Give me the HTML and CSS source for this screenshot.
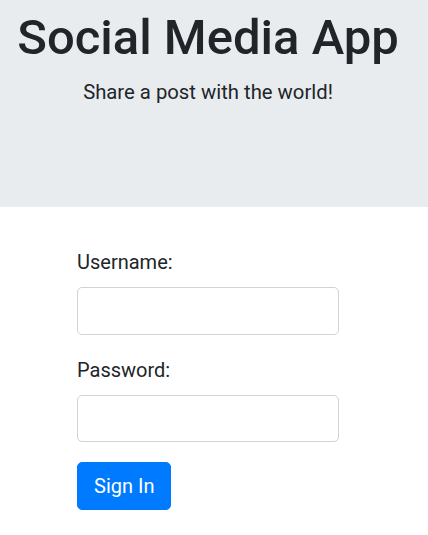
FILE: index.html
```html
<!DOCTYPE html>
<html lang="en">
<head>
<meta charset="utf-8">
<title>Social Media App</title>
<link rel="stylesheet" href="styles.css">
</head>
<body>
<header class="jumbotron">
  <h1 class="title">Social Media App</h1>
  <p class="lead">Share a post with the world!</p>
</header>
<main class="container">
  <form class="login">
    <div class="form-group">
      <label for="username">Username:</label>
      <input id="username" type="text" class="form-control">
    </div>
    <div class="form-group">
      <label for="password">Password:</label>
      <input id="password" type="password" class="form-control">
    </div>
    <button type="submit" class="btn">Sign In</button>
  </form>
</main>
</body>
</html>
```
FILE: styles.css
```css
* { box-sizing: border-box; }
html, body {
  margin: 0;
  padding: 0;
}
body {
  font-family: Roboto, "Liberation Sans", sans-serif;
  font-size: 20px;
  line-height: 1.5;
  color: #212529;
  background: #fff;
}
.jumbotron {
  background: #e9ecef;
  height: 207px;
  margin-bottom: 40px;
  padding: 9px 20px 0 8px;
  text-align: center;
}
.title {
  margin: 0 0 9px;
  font-size: 49px;
  font-weight: 500;
  line-height: 1.2;
  white-space: nowrap;
}
.lead {
  margin: 0;
  font-size: 20.3px;
  font-weight: 400;
}
.container {
  padding-left: 77px;
}
.login {
  width: 262px;
}
.form-group {
  margin-bottom: 20px;
}
label {
  display: block;
  margin-bottom: 10px;
}
.form-control {
  display: block;
  width: 100%;
  height: 47.5px;
  padding: 7.5px 15px;
  font: inherit;
  color: #495057;
  background: #fff;
  border: 1px solid #ced4da;
  border-radius: 5px;
}
.btn {
  display: inline-block;
  height: 47.5px;
  padding: 7.5px 16px;
  font: inherit;
  color: #fff;
  background: #007bff;
  border: 1px solid #007bff;
  border-radius: 5px;
}
```
